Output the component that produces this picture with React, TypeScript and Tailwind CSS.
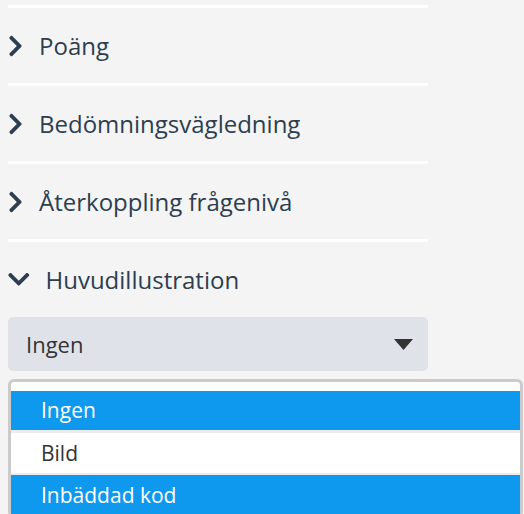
import React from "react";

const ChevronRight = () => (
  <svg width="15" height="24" viewBox="0 0 320 512" className="shrink-0" fill="#2c3e50">
    <path d="M285.476 272.971L91.132 467.314c-9.373 9.373-24.569 9.373-33.941 0l-22.667-22.667c-9.357-9.357-9.375-24.522-.04-33.901L188.505 256 34.484 101.255c-9.335-9.379-9.317-24.544.04-33.901l22.667-22.667c9.373-9.373 24.569-9.373 33.941 0L285.475 239.03c9.373 9.372 9.373 24.568.001 33.941z" />
  </svg>
);

const ChevronDown = () => (
  <svg width="21.5" height="24.6" viewBox="0 0 448 512" className="shrink-0" fill="#2c3e50">
    <path d="M207.029 381.476L12.686 187.132c-9.373-9.373-9.373-24.569 0-33.941l22.667-22.667c9.357-9.357 24.522-9.375 33.901-.04L224 284.505l154.745-154.021c9.379-9.335 24.544-9.317 33.901.04l22.667 22.667c9.373 9.373 9.373 24.569 0 33.941L240.971 381.476c-9.373 9.372-24.569 9.372-33.942 0z" />
  </svg>
);

function Row({ label, open }: { label: string; open?: boolean }) {
  return (
    <>
      <div className="h-[3px] bg-white" />
      <div className="h-[75px] flex items-center">
        {open ? (
          <>
            <ChevronDown />
            <span className="ml-[16px]">{label}</span>
          </>
        ) : (
          <>
            <ChevronRight />
            <span className="ml-[16px]">{label}</span>
          </>
        )}
      </div>
    </>
  );
}

export default function App() {
  return (
    <div
      className="w-[524px] h-[514px] overflow-hidden bg-[#f4f4f4] pt-[5px]"
      style={{ fontFamily: '"Open Sans", "Noto Sans", sans-serif' }}
    >
      <div className="ml-[8px] w-[420px] text-[24px] text-[#2c3e50] leading-none">
        <Row label="Poäng" />
        <Row label="Bedömningsvägledning" />
        <Row label="Återkoppling frågenivå" />
        <Row label="Huvudillustration" open />
        <div className="h-[54px] rounded-[5px] bg-[#dfe3e9] flex items-center justify-between pl-[18px] pr-[15px]">
          <span className="text-[22px] text-[#333333]">Ingen</span>
          <svg width="19" height="11" viewBox="0 0 19 11" fill="#333333">
            <path d="M0 0 H19 L9.5 11 Z" />
          </svg>
        </div>
      </div>
      <div className="ml-[8px] mt-[8px] w-[515px] rounded-[6px] border-[3px] border-[#cbcbcb] bg-white pt-[9px] text-[21px] leading-none">
        <div className="h-[39px] bg-[#0f99ee] text-white flex items-center pl-[30px] border-b-[3px] border-[#ececec] box-content">
          Ingen
        </div>
        <div className="h-[40px] bg-white text-[#333333] flex items-center pl-[30px] border-b-[2px] border-[#ececec] box-content">
          Bild
        </div>
        <div className="h-[40px] bg-[#0f99ee] text-white flex items-center pl-[30px]">
          Inbäddad kod
        </div>
      </div>
    </div>
  );
}
